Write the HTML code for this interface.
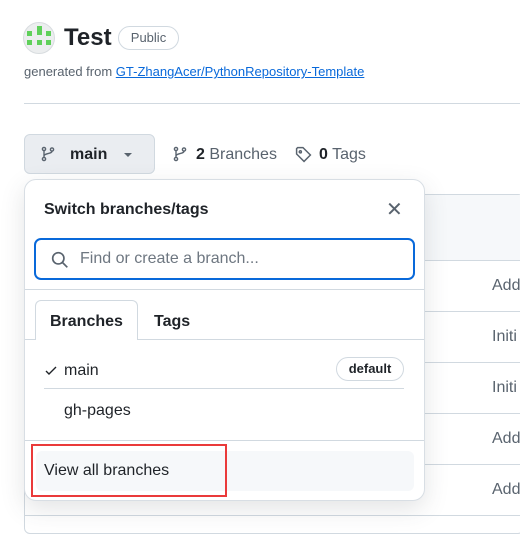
<!DOCTYPE html>
<html><head><style>
*{box-sizing:border-box;margin:0;padding:0}
body{width:520px;height:524px;overflow:hidden;background:#fff;font-family:"Liberation Sans",sans-serif;color:#1f2328;position:relative}
.a{position:absolute}
.line{position:absolute;height:1px;background:#d1d9e0}
.r{position:absolute;left:492px;font-size:16px;color:#59636e}
</style></head><body>
<div class="a" style="left:23px;top:22px;width:32px;height:32px;border-radius:50%;background:#eceeef;border:1px solid #d8dcdf"></div>
<div class="a" style="left:27px;top:31px;width:5px;height:5px;background:#5fd05a"></div>
<div class="a" style="left:37px;top:26px;width:5px;height:9px;background:#5fd05a"></div>
<div class="a" style="left:46px;top:31px;width:5px;height:5px;background:#5fd05a"></div>
<div class="a" style="left:27px;top:40px;width:5px;height:5px;background:#5fd05a"></div>
<div class="a" style="left:37px;top:40px;width:5px;height:5px;background:#5fd05a"></div>
<div class="a" style="left:46px;top:40px;width:5px;height:5px;background:#5fd05a"></div>
<div class="a" style="left:64px;top:24px;font-size:24px;font-weight:bold">Test</div>
<div class="a" style="left:118px;top:26px;width:61px;height:24px;border:1px solid #d1d9e0;border-radius:12px;font-size:13px;color:#59636e;text-align:center;line-height:22px">Public</div>
<div class="a" style="left:24px;top:64px;font-size:13px;color:#59636e">generated from <span style="color:#0969da;text-decoration:underline">GT-ZhangAcer/PythonRepository-Template</span></div>
<div class="line" style="left:24px;top:103px;width:496px"></div>

<div class="a" style="left:24px;top:134px;width:131px;height:40px;background:#eaedf1;border:1px solid #d1d9e0;border-radius:6px"></div>
<svg class="a" style="left:40px;top:146px" width="16" height="16" viewBox="0 0 16 16" fill="none" stroke="#59636e" stroke-width="1.4"><circle cx="4" cy="3" r="1.6"/><circle cx="4" cy="13" r="1.6"/><circle cx="12" cy="3.5" r="1.6"/><path d="M4 4.6v6.8M12 5.1c0 3-8 2-8 5"/></svg>
<div class="a" style="left:70px;top:146px;font-size:16px;font-weight:bold">main</div>
<div class="a" style="left:124px;top:153px;border-left:4px solid transparent;border-right:4px solid transparent;border-top:4px solid #59636e"></div>
<svg class="a" style="left:172px;top:146px" width="16" height="16" viewBox="0 0 16 16" fill="none" stroke="#59636e" stroke-width="1.4"><circle cx="4" cy="3" r="1.6"/><circle cx="4" cy="13" r="1.6"/><circle cx="12" cy="3.5" r="1.6"/><path d="M4 4.6v6.8M12 5.1c0 3-8 2-8 5"/></svg>
<div class="a" style="left:196px;top:146px;font-size:16px;color:#59636e"><b style="color:#1f2328">2</b> Branches</div>
<svg class="a" style="left:295px;top:146px" width="17" height="17" viewBox="0 0 16 16" fill="none" stroke="#59636e" stroke-width="1.4"><path d="M1.5 2.5v5l7 7 6-6-7-7h-5z"/><circle cx="5" cy="5.5" r="1"/></svg>
<div class="a" style="left:319px;top:146px;font-size:16px;color:#59636e"><b style="color:#1f2328">0</b> Tags</div>

<div class="a" style="left:24px;top:194px;width:500px;height:340px;border:1px solid #d1d9e0;border-radius:6px"></div>
<div class="a" style="left:424px;top:195px;width:96px;height:65px;background:#f6f8fa"></div>
<div class="line" style="left:424px;top:260px;width:96px"></div>
<div class="line" style="left:424px;top:311px;width:96px"></div>
<div class="line" style="left:424px;top:362px;width:96px"></div>
<div class="line" style="left:424px;top:413px;width:96px"></div>
<div class="line" style="left:424px;top:464px;width:96px"></div>
<div class="line" style="left:24px;top:515px;width:496px"></div>
<div class="r" style="top:277px">Add</div>
<div class="r" style="top:328px">Initi</div>
<div class="r" style="top:379px">Initi</div>
<div class="r" style="top:430px">Add</div>
<div class="r" style="top:481px">Add</div>

<div class="a" style="left:24px;top:179px;width:401px;height:322px;background:#fff;border:1px solid #d8dee4;border-radius:12px;box-shadow:0 8px 24px rgba(66,74,83,.15)"></div>
<div class="a" style="left:44px;top:201px;font-size:16px;font-weight:bold">Switch branches/tags</div>
<div class="a" style="left:386px;top:197px;font-size:20px;color:#59636e">✕</div>
<div class="a" style="left:34px;top:238px;width:381px;height:42px;border:2px solid #0969da;border-radius:7px"></div>
<svg class="a" style="left:51px;top:251px" width="18" height="18" viewBox="0 0 16 16" fill="none" stroke="#59636e" stroke-width="1.5"><circle cx="6.5" cy="6.5" r="5"/><path d="M10.2 10.2l4.3 4.3"/></svg>
<div class="a" style="left:80px;top:250px;font-size:16px;color:#6e7781">Find or create a branch...</div>
<div class="line" style="left:25px;top:289px;width:399px"></div>
<div class="line" style="left:25px;top:339px;width:399px"></div>
<div class="a" style="left:35px;top:300px;width:103px;height:40px;border:1px solid #d1d9e0;border-bottom:none;border-radius:6px 6px 0 0;background:#fff"></div>
<div class="a" style="left:50px;top:313px;font-size:16px;font-weight:bold">Branches</div>
<div class="a" style="left:154px;top:313px;font-size:16px;font-weight:bold">Tags</div>
<svg class="a" style="left:44px;top:365px" width="14" height="12" viewBox="0 0 14 12" fill="none" stroke="#1f2328" stroke-width="1.4"><path d="M2 6l3 3 7-7"/></svg>
<div class="a" style="left:64px;top:362px;font-size:16px">main</div>
<div class="a" style="left:336px;top:357px;width:68px;height:24px;border:1px solid #d1d9e0;border-radius:12px;font-size:13px;font-weight:bold;text-align:center;line-height:22px">default</div>
<div class="line" style="left:44px;top:388px;width:360px"></div>
<div class="a" style="left:64px;top:402px;font-size:16px">gh-pages</div>
<div class="line" style="left:25px;top:440px;width:399px"></div>
<div class="a" style="left:36px;top:451px;width:378px;height:40px;background:#f6f8fa;border-radius:6px"></div>
<div class="a" style="left:44px;top:462px;font-size:16px">View all branches</div>
<div class="a" style="left:31px;top:444px;width:196px;height:53px;border:2px solid #ea3a3a"></div>
</body></html>
